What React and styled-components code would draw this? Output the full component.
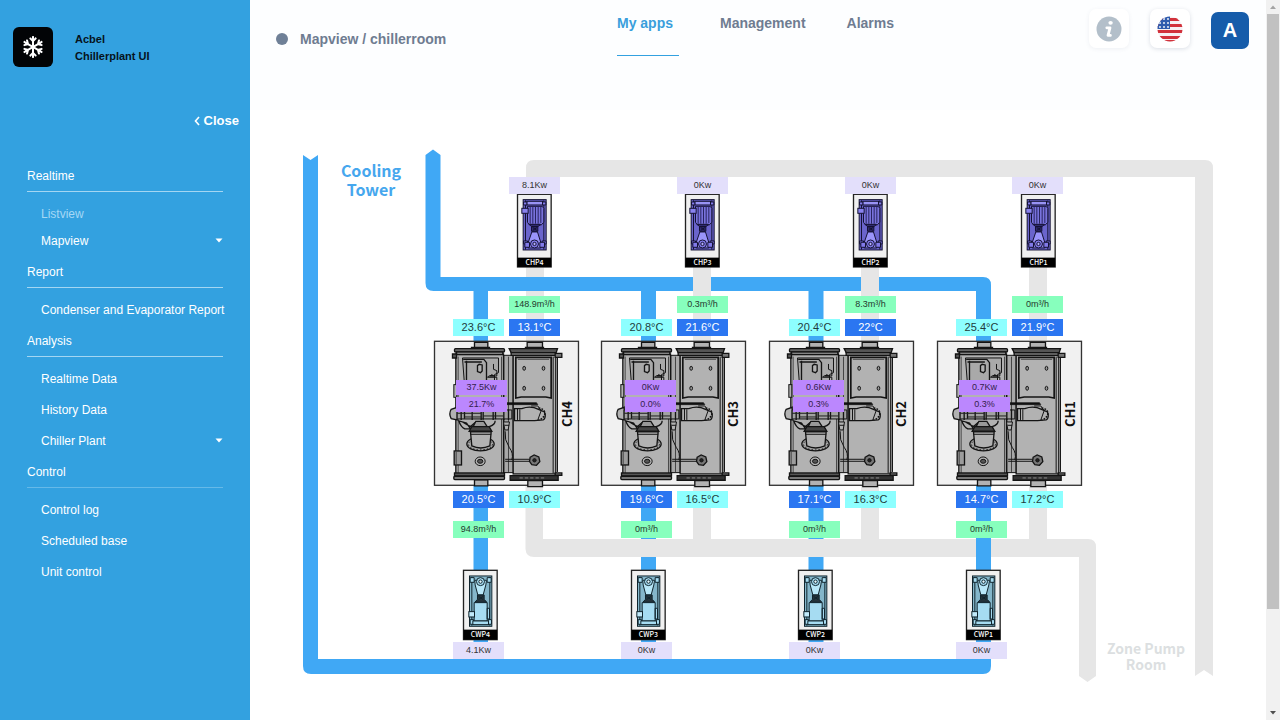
import React from "react";
import styled, { createGlobalStyle, css } from "styled-components";
import { FaRegSnowflake } from "react-icons/fa";

const GlobalStyle = createGlobalStyle`
  * { box-sizing: border-box; }
  body {
    margin: 0;
    background: #ffffff;
    font-family: "Liberation Sans", Arial, sans-serif;
  }
  button { font: inherit; border: 0; padding: 0; background: none; cursor: pointer; }
  a { color: inherit; text-decoration: none; }
  ul { list-style: none; margin: 0; padding: 0; }
  h1, h2 { margin: 0; }
`;

/* ---------- shell ---------- */

const Shell = styled.div`
  display: flex;
  min-height: 100vh;
`;

const Main = styled.main`
  flex: 1;
  min-width: 0;
  display: flex;
  flex-direction: column;
`;

/* ---------- sidebar ---------- */

const Sidebar = styled.aside`
  flex: 0 0 250px;
  min-width: 0;
  background: #33a1e0;
  color: #ffffff;
`;

const Brand = styled.div`
  display: flex;
  align-items: center;
  gap: 22px;
  padding: 27px 13px 0;
`;

const Logo = styled.span`
  display: flex;
  align-items: center;
  justify-content: center;
  width: 40px;
  height: 40px;
  border-radius: 6px;
  background: #020406;
  color: #ffffff;
  font-size: 22px;
`;

const BrandName = styled.div`
  padding-top: 2px;
  font-size: 11px;
  line-height: 17px;
  font-weight: 700;
  color: #06131c;
`;

const CloseButton = styled.button`
  display: flex;
  align-items: center;
  gap: 4px;
  margin: 44px 11px 0 auto;
  color: #ffffff;
  && {
    font-size: 13px;
    line-height: 20px;
    font-weight: 700;
  }
`;

const Menu = styled.nav`
  padding: 29px 27px 0;
  font-size: 12px;
`;

const SectionTitle = styled.h2`
  margin-top: 7px;
  padding-bottom: 6px;
  border-bottom: 1px solid ${(p) => (p.$faint ? "#66b9e8" : "#a4d6f2")};
  font-size: 12px;
  line-height: 18px;
  font-weight: 400;
`;

const MenuList = styled.ul`
  padding: 6px 0 0 14px;
`;

const MenuLink = styled.a`
  display: flex;
  align-items: center;
  justify-content: space-between;
  height: 31px;
  white-space: nowrap;
  ${(p) =>
    p.$muted &&
    css`
      height: 27px;
      padding-top: 5px;
      color: #a5d8f5;
    `}
`;

/* ---------- header ---------- */

const Header = styled.header`
  display: grid;
  grid-template-columns: minmax(180px, 341px) 1fr auto;
  align-items: start;
  height: 110px;
  padding: 0 17px 0 26px;
  background: #fdfeff;
`;

const Crumb = styled.h1`
  display: flex;
  align-items: center;
  gap: 12px;
  padding-top: 29px;
  font-size: 14px;
  line-height: 20px;
  font-weight: 700;
  color: #6f7c91;
`;

const Dot = styled.span`
  width: 12px;
  height: 12px;
  border-radius: 50%;
  background: #6f8097;
`;

const Tabs = styled.nav`
  display: flex;
  gap: 41px;
  padding-top: 13px;
`;

const Tab = styled.a`
  min-width: 62px;
  height: 43px;
  font-size: 14px;
  line-height: 20px;
  font-weight: 700;
  color: ${(p) => (p.$active ? "#3a9fdc" : "#6f7c91")};
  border-bottom: 1px solid ${(p) => (p.$active ? "#33a1e0" : "transparent")};
`;

const Actions = styled.div`
  display: flex;
  align-items: flex-start;
  gap: 21px;
  padding-top: 9px;
`;

const IconButton = styled.button`
  display: flex;
  align-items: center;
  justify-content: center;
  width: 40px;
  height: 39px;
  border-radius: 7px;
  background: #ffffff;
  box-shadow: 0 1px 4px ${(p) => (p.$soft ? "rgba(60,80,110,0.08)" : "rgba(60,80,110,0.18)")};
`;

const Avatar = styled.button`
  && {
    width: 38px;
    height: 37px;
    margin-top: 3px;
    border-radius: 7px;
    background: #165caa;
    color: #ffffff;
    font-size: 20px;
    font-weight: 700;
  }
`;

/* ---------- plant canvas ---------- */

const Plan = styled.section`
  position: relative;
  flex: 1;
  min-height: 610px;
  overflow: hidden;
`;

const Drawing = styled.svg`
  display: block;
  width: 1016px;
  height: 610px;
`;

const TAG = {
  power: { bg: "#e3dffb", fg: "#333333", size: 9, h: 17 },
  flow: { bg: "#87ffbd", fg: "#24382d", size: 9, h: 17 },
  cool: { bg: "#8dffff", fg: "#1f3c3c", size: 11, h: 17 },
  hot: { bg: "#2b76f1", fg: "#ffffff", size: 11, h: 17 },
  load: { bg: "#bb87fe", fg: "#34214c", size: 9, h: 15 },
};

const Tag = styled.div`
  position: absolute;
  left: ${(p) => p.$x - 250}px;
  top: ${(p) => p.$y - 110}px;
  width: 51px;
  height: ${(p) => TAG[p.$kind].h}px;
  line-height: ${(p) => TAG[p.$kind].h}px;
  font-size: ${(p) => TAG[p.$kind].size}px;
  text-align: center;
  white-space: nowrap;
  background: ${(p) => TAG[p.$kind].bg};
  color: ${(p) => TAG[p.$kind].fg};
`;

const AreaLabel = styled.div`
  position: absolute;
  left: ${(p) => p.$x - 250}px;
  top: ${(p) => p.$y - 110}px;
  width: ${(p) => p.$width}px;
  text-align: center;
  font-family: "Noto Sans CJK SC", sans-serif;
  font-weight: 700;
  font-size: ${(p) => p.$size}px;
  line-height: ${(p) => p.$line}px;
  color: ${(p) => p.$color};
`;

/* ---------- scroll track ---------- */

const Track = styled.div`
  position: sticky;
  top: 0;
  flex: 0 0 14px;
  display: flex;
  flex-direction: column;
  align-items: center;
  height: 100vh;
  background: #f1f1f1;
`;

const Arrow = styled.span`
  display: flex;
  align-items: center;
  justify-content: center;
  width: 14px;
  height: 14px;
`;

const Rail = styled.div`
  flex: 1;
  width: 12px;
`;

const Thumb = styled.div`
  height: 86%;
  background: #c1c1c1;
`;

/* ---------- data ---------- */

const sections = [
  { title: "Realtime", items: [{ label: "Listview", muted: true }, { label: "Mapview", caret: true }] },
  { title: "Report", items: [{ label: "Condenser and Evaporator Report" }] },
  { title: "Analysis", items: [{ label: "Realtime Data" }, { label: "History Data" }, { label: "Chiller Plant", caret: true }] },
  { title: "Control", faint: true, items: [{ label: "Control log" }, { label: "Scheduled base" }, { label: "Unit control" }] },
];

const units = [
  { n: 4, x: 453, load: 456, box: 434, label: 572, pump: 517, low: 463, kw: "8.1Kw", flow: "148.9m³/h", cin: "23.6°C", eout: "13.1°C", p: "37.5Kw", pct: "21.7%", cout: "20.5°C", ein: "10.9°C", cflow: "94.8m³/h", ckw: "4.1Kw" },
  { n: 3, x: 621, load: 625, box: 601, label: 738, pump: 685, low: 631, kw: "0Kw", flow: "0.3m³/h", cin: "20.8°C", eout: "21.6°C", p: "0Kw", pct: "0.0%", cout: "19.6°C", ein: "16.5°C", cflow: "0m³/h", ckw: "0Kw" },
  { n: 2, x: 789, load: 793, box: 769, label: 906, pump: 853, low: 798, kw: "0Kw", flow: "8.3m³/h", cin: "20.4°C", eout: "22°C", p: "0.6Kw", pct: "0.3%", cout: "17.1°C", ein: "16.3°C", cflow: "0m³/h", ckw: "0Kw" },
  { n: 1, x: 956, load: 959, box: 937, label: 1075, pump: 1021, low: 966, kw: "0Kw", flow: "0m³/h", cin: "25.4°C", eout: "21.9°C", p: "0.7Kw", pct: "0.3%", cout: "14.7°C", ein: "17.2°C", cflow: "0m³/h", ckw: "0Kw" },
];

/* ---------- drawings ---------- */

const PLAN_FONT = '"Noto Sans CJK SC", sans-serif';

function Chiller({ x }) {
  return (
    <g transform={`translate(${x + 0.5} 341.3) scale(0.3333) translate(-28 -34)`} stroke="#141414" strokeWidth="4" fill="#b2b2b2">
      <rect x="28" y="34" width="432" height="432" fill="#f1f1f1" stroke="#333" />
      <path d="M148 37h40v18h-40zM306 37h46v18h-46zM148 450h40v18h-40zM308 452h44v18h-44z" />
      <path d="M137 52h58M299 52h58" />
      <rect x="236" y="76" width="28" height="352" fill="#a8a8a8" strokeWidth="3" />
      <path d="M250 80v346" strokeWidth="2" />
      {/* condenser shell */}
      <rect x="92" y="72" width="143" height="360" />
      <path d="M99 80v350M229 80v350" strokeWidth="2" />
      <rect x="88" y="56" width="150" height="10" rx="3" fill="#666" />
      <rect x="94" y="66" width="139" height="8" fill="#888" />
      <path d="M82 72h12v12h-12z" fill="#555" />
      <rect x="88" y="429" width="150" height="9" fill="#555" />
      <rect x="86" y="439" width="152" height="10" rx="3" fill="#777" />
      {/* evaporator shell */}
      <rect x="264" y="72" width="128" height="360" fill="#b2b2b2" />
      <path d="M384 80v350M397 84v342" strokeWidth="3" />
      <path d="M252 56h145l-4 12H258z" fill="#555" />
      <path d="M258 68h132v8H258zM390 70h20v12h-20zM390 429h20v7h-20z" fill="#777" />
      <path d="M255 437h144v14H255z" fill="#333" />
      <path d="M283 444h80" stroke="#8a8a8a" strokeWidth="3" strokeDasharray="10 6" />
      <path d="M272 82h106v122l-16-3h-74l-16 3z" strokeWidth="5" />
      <path d="M278 88h94" strokeWidth="2" />
      {[[297, 115], [355, 115], [297, 175], [355, 175]].map(([cx, cy]) => (
        <ellipse key={`${cx}-${cy}`} cx={cx} cy={cy} rx="4" ry="6" fill="#999" strokeWidth="3" />
      ))}
      {/* control cabinet */}
      <path d="M112 84h108v44l-12 6v30H118z" fill="#a9a9a9" strokeWidth="3" />
      <path d="M114 88h62l8 10v62M118 96h52M124 92v66" strokeWidth="4" fill="none" />
      <path d="M157 107l5-4 9 2v18l-5 5-9-3z" strokeWidth="4" />
      <path d="M205 102v16l10 4v16h-24l-4 4h28v18" fill="none" strokeWidth="3" />
      <path d="M194 138l6-4 6 4z" fill="#111" strokeWidth="3" />
      <rect x="86" y="164" width="9" height="38" strokeWidth="3" />
      {/* compressor line */}
      <path d="M246 218h88l4 6h-92z" fill="#111" strokeWidth="2" />
      <path d="M78 238l18-6v38l-18-4q-8-14 0-28z" />
      <path d="M96 240h164v27H96z" fill="#a2a2a2" strokeWidth="3" />
      <path d="M108 236v34M118 242v24M141 236v34M168 240v30M174 236v33M204 236v34M211 240v28M236 236v34M250 238v32" strokeWidth="4" />
      <path d="M96 250h72M174 258h62M118 261h50" stroke="#222" strokeWidth="3" />
      <path d="M101 273q6 18 18 24h17l-12-18zM112 276l24 14 14-12" strokeWidth="4" />
      <path d="M268 236h22q26-10 50 2l18 8q6 18-4 24l-26 2H268z" fill="#b2b2b2" />
      <path d="M277 236v34M284 238v32M318 228h20l10 14-10 28" strokeWidth="3" fill="none" />
      <path d="M340 234q16 2 20 16-4 16-20 20" fill="none" strokeWidth="5" strokeDasharray="5 4" />
      <path d="M235 276h18l-4 24h-10zM238 286h14" strokeWidth="3" />
      <path d="M152 274h24l10 16h-42z" fill="#999" />
      <path d="M140 290h52l8 14h-68z" fill="#444" />
      <path d="M192 290q18-6 18-18" fill="none" />
      {/* suction elbow */}
      <ellipse cx="166" cy="342" rx="41" ry="21" fill="#a4a4a4" strokeWidth="4" />
      <ellipse cx="166" cy="343" rx="36" ry="17" fill="none" strokeWidth="3" strokeDasharray="4 6" />
      <path d="M136 306h62l-4 42q-28 12-54 0z" />
      <path d="M136 313h62" strokeWidth="3" />
      <rect x="87" y="363" width="22" height="42" fill="#9c9c9c" />
      <path d="M93 366v36" strokeWidth="2" />
      <ellipse cx="165" cy="394" rx="15" ry="13" strokeWidth="3" />
      <ellipse cx="165" cy="394" rx="8" ry="6" fill="#555" strokeWidth="3" />
      <path d="M240 388h72M240 394h72M240 304q-3 26 12 48 14 18 8 38" fill="none" strokeWidth="3" />
      <path d="M315 382l12-7 14 6 3 14-10 11-14-2-7-10z" fill="#777" />
      <circle cx="328" cy="391" r="5" fill="#222" strokeWidth="3" />
    </g>
  );
}

function UpperPump({ x, name }) {
  return (
    <g transform={`translate(${x + 0.5} 194.3) scale(0.3333) translate(-52 -132)`} stroke="#141233" strokeWidth="3" fill="#827bea">
      <rect x="52" y="132" width="101" height="218" fill="#f0f0f0" stroke="#222" strokeWidth="4" />
      <rect x="69" y="148" width="69" height="151" fill="#6a64cc" />
      <path d="M76 150v148M131 150v148" />
      <rect x="80" y="153" width="47" height="11" fill="#9993f5" />
      <path d="M70 155h10v9H70zM127 155h10v9h-10zM70 272h12v9H70zM126 272h12v9h-12z" />
      <path d="M82 168h44l5 6v42l-8 8H88l-6-8z" fill="#7973dd" />
      <path d="M90 170v50M98 170v50M106 170v50M114 170v50M122 170v48" stroke="#28245f" />
      <rect x="65" y="174" width="19" height="15" fill="#8982ee" />
      <path d="M87 222h34l-7 7H94zM94 229h19v14H94zM98 232l12 8M110 232l-12 8" fill="#302b70" />
      <path d="M95 245h17l10 32v16H84v-16z" fill="#9a94fa" />
      <path d="M74 276h14v15H74zM119 276h14v15h-14z" />
      <circle cx="103" cy="281" r="12" />
      <circle cx="103" cy="281" r="5" fill="#b7b2ff" />
      <rect x="52" y="322" width="101" height="28" fill="#000" stroke="none" />
      <text x="103" y="344" fontFamily={PLAN_FONT} fontSize="21" fontWeight="500" fill="#fff" stroke="none" textAnchor="middle">{name}</text>
    </g>
  );
}

function LowerPump({ x, name }) {
  return (
    <g transform={`translate(${x + 0.5} 570.3) scale(0.3333) translate(-100 -270)`} stroke="#10242d" strokeWidth="3" fill="#a6dcf2">
      <rect x="100" y="270" width="101" height="208" fill="#f0f0f0" stroke="#222" strokeWidth="4" />
      <rect x="118" y="287" width="67" height="151" fill="#84b6ca" />
      <path d="M125 290v146M179 290v146" />
      <path d="M120 292h12v14h-12zM171 292h12v14h-12zM120 418h10v14h-10zM174 418h10v14h-10z" />
      <path d="M134 300h35l-2 14-8 30h-16l-8-30z" fill="#b8e7f8" />
      <circle cx="151" cy="304" r="12" />
      <circle cx="151" cy="304" r="5" fill="#e6faff" />
      <path d="M142 344h20v13l8 9h-36l8-9zM145 348l14 10M159 348l-14 10" fill="#25333b" />
      <path d="M132 367h39v55h-39zM171 384h7v32h-7z" />
      <rect x="116" y="394" width="17" height="16" fill="#c1eafa" />
      <rect x="128" y="422" width="47" height="11" />
      <rect x="100" y="448" width="101" height="30" fill="#000" stroke="none" />
      <text x="151" y="470" fontFamily={PLAN_FONT} fontSize="21" fontWeight="500" fill="#fff" stroke="none" textAnchor="middle">{name}</text>
    </g>
  );
}

function Pipes() {
  return (
    <>
      <g fill="#e6e6e6">
        <path d="M526 280V168q0-8 8-8h671q8 0 8 8v508l-9-6-9 6V177H544v163h-18z" />
        <path d="M1029 177h18v163h-18z" />
      </g>
      <g fill="#40a8f5">
        <path d="M303 155l7.500 5 7.500-5v504h658v-30h15v37q0 8-8 8H311q-8 0-8-8z" />
        <path d="M425.500 155l7.500-5.500 7.500 5.500v122H983q8 0 8 8v58h-15v-52H433.500q-8 0-8-8z" />
        <path d="M473.500 285h14.500v58h-14.500zM641 285h15v58h-15zM808.500 285h15v58h-15z" />
        <path d="M473.500 484h14.500v180h-14.500zM641 484h15v180h-15zM808.500 484h15v180h-15z" />
      </g>
      <g fill="#e6e6e6">
        <path d="M526 292h18v50h-18zM693 168h18v174h-18zM861 168h18v174h-18z" />
        <path d="M525.500 484h17.500v55h150v-55h18v55h150v-55h18v55h150v-55h18v55h41q8 0 8 8v129l-8.500 6-8.500-6V557H534q-8 0-8.500-8z" />
      </g>
      <path d="M976 484h15v100h-15z" fill="#40a8f5" />
    </>
  );
}

function PlantDrawing() {
  return (
    <Drawing viewBox="250 110 1016 610" role="img" aria-label="Chiller room piping">
      <Pipes />
      {units.map((u) => (
        <g key={u.n}>
          <Chiller x={u.box} />
          <text transform={`translate(${u.label} 414) rotate(-90)`} fontFamily={PLAN_FONT} fontWeight="700" fontSize="13" fill="#111" textAnchor="middle">{`CH${u.n}`}</text>
          <UpperPump x={u.pump} name={`CHP${u.n}`} />
          <LowerPump x={u.low} name={`CWP${u.n}`} />
        </g>
      ))}
    </Drawing>
  );
}

function UnitTags({ u }) {
  return (
    <>
      <Tag $kind="power" $x={u.x + 56} $y={177}>{u.kw}</Tag>
      <Tag $kind="flow" $x={u.x + 56} $y={296}>{u.flow}</Tag>
      <Tag $kind="cool" $x={u.x} $y={319}>{u.cin}</Tag>
      <Tag $kind="hot" $x={u.x + 56} $y={319}>{u.eout}</Tag>
      <Tag $kind="load" $x={u.load} $y={380}>{u.p}</Tag>
      <Tag $kind="load" $x={u.load} $y={397}>{u.pct}</Tag>
      <Tag $kind="hot" $x={u.x} $y={491}>{u.cout}</Tag>
      <Tag $kind="cool" $x={u.x + 56} $y={491}>{u.ein}</Tag>
      <Tag $kind="flow" $x={u.x} $y={521}>{u.cflow}</Tag>
      <Tag $kind="power" $x={u.x} $y={642}>{u.ckw}</Tag>
    </>
  );
}

function Caret() {
  return (
    <svg width="8" height="5" viewBox="0 0 8 5" aria-hidden="true">
      <path d="M0.500 0.500h7L4 4.500z" fill="#fff" />
    </svg>
  );
}

function InfoIcon() {
  return (
    <svg width="26" height="26" viewBox="0 0 26 26" aria-hidden="true">
      <circle cx="13" cy="13" r="12.500" fill="#b3bfca" />
      <ellipse cx="14.600" cy="6.800" rx="2.200" ry="1.900" fill="#fff" />
      <path d="M10.800 11.800h3.200l-2 7.600h2.400" fill="none" stroke="#fff" strokeWidth="2.800" strokeLinejoin="round" strokeLinecap="round" />
    </svg>
  );
}

function FlagIcon() {
  return (
    <svg width="26" height="26" viewBox="0 0 26 26" aria-hidden="true">
      <clipPath id="flag-disc"><circle cx="13" cy="13" r="12.500" /></clipPath>
      <g clipPath="url(#flag-disc)">
        <rect width="26" height="26" fill="#f6f1f4" />
        {[2, 8, 14, 20].map((y) => (
          <rect key={y} y={y} width="26" height="3" fill="#d2323c" />
        ))}
        <rect y="24" width="26" height="2" fill="#d2323c" />
        <rect width="13" height="13" fill="#2f5cae" />
        {[3, 7, 11].map((y) => [3, 7, 11].map((x) => <circle key={`${x}-${y}`} cx={x} cy={y} r="0.900" fill="#fff" />))}
      </g>
    </svg>
  );
}

export default function App() {
  return (
    <>
      <GlobalStyle />
      <Shell>
        <Sidebar>
          <Brand>
            <Logo><FaRegSnowflake aria-hidden="true" /></Logo>
            <BrandName>Acbel<br />Chillerplant UI</BrandName>
          </Brand>
          <CloseButton type="button">
            <svg width="6" height="10" viewBox="0 0 6 10" aria-hidden="true">
              <path d="M5 1L1.500 5L5 9" fill="none" stroke="#fff" strokeWidth="1.600" />
            </svg>
            Close
          </CloseButton>
          <Menu>
            {sections.map((s) => (
              <React.Fragment key={s.title}>
                <SectionTitle $faint={s.faint}>{s.title}</SectionTitle>
                <MenuList>
                  {s.items.map((i) => (
                    <li key={i.label}>
                      <MenuLink href="#" $muted={i.muted}>{i.label}{i.caret && <Caret />}</MenuLink>
                    </li>
                  ))}
                </MenuList>
              </React.Fragment>
            ))}
          </Menu>
        </Sidebar>

        <Main>
          <Header>
            <Crumb><Dot />Mapview / chillerroom</Crumb>
            <Tabs>
              <Tab href="#" $active>My apps</Tab>
              <Tab href="#">Management</Tab>
              <Tab href="#">Alarms</Tab>
            </Tabs>
            <Actions>
              <IconButton type="button" aria-label="Information" $soft><InfoIcon /></IconButton>
              <IconButton type="button" aria-label="Language"><FlagIcon /></IconButton>
              <Avatar type="button">A</Avatar>
            </Actions>
          </Header>
          <Plan>
            <PlantDrawing />
            <AreaLabel $x={331} $y={161} $width={80} $size={16} $line={19} $color="#46a7ee">Cooling Tower</AreaLabel>
            <AreaLabel $x={1101} $y={640} $width={90} $size={14} $line={16} $color="#dcdfe1">Zone Pump Room</AreaLabel>
            {units.map((u) => <UnitTags key={u.n} u={u} />)}
          </Plan>
        </Main>

        <Track aria-hidden="true">
          <Arrow>
            <svg width="6" height="4" viewBox="0 0 6 4"><path d="M0 4L3 0.500L6 4z" fill="#a3a3a3" /></svg>
          </Arrow>
          <Rail><Thumb /></Rail>
          <Arrow>
            <svg width="6" height="4" viewBox="0 0 6 4"><path d="M0 0L3 3.500L6 0z" fill="#505050" /></svg>
          </Arrow>
        </Track>
      </Shell>
    </>
  );
}
